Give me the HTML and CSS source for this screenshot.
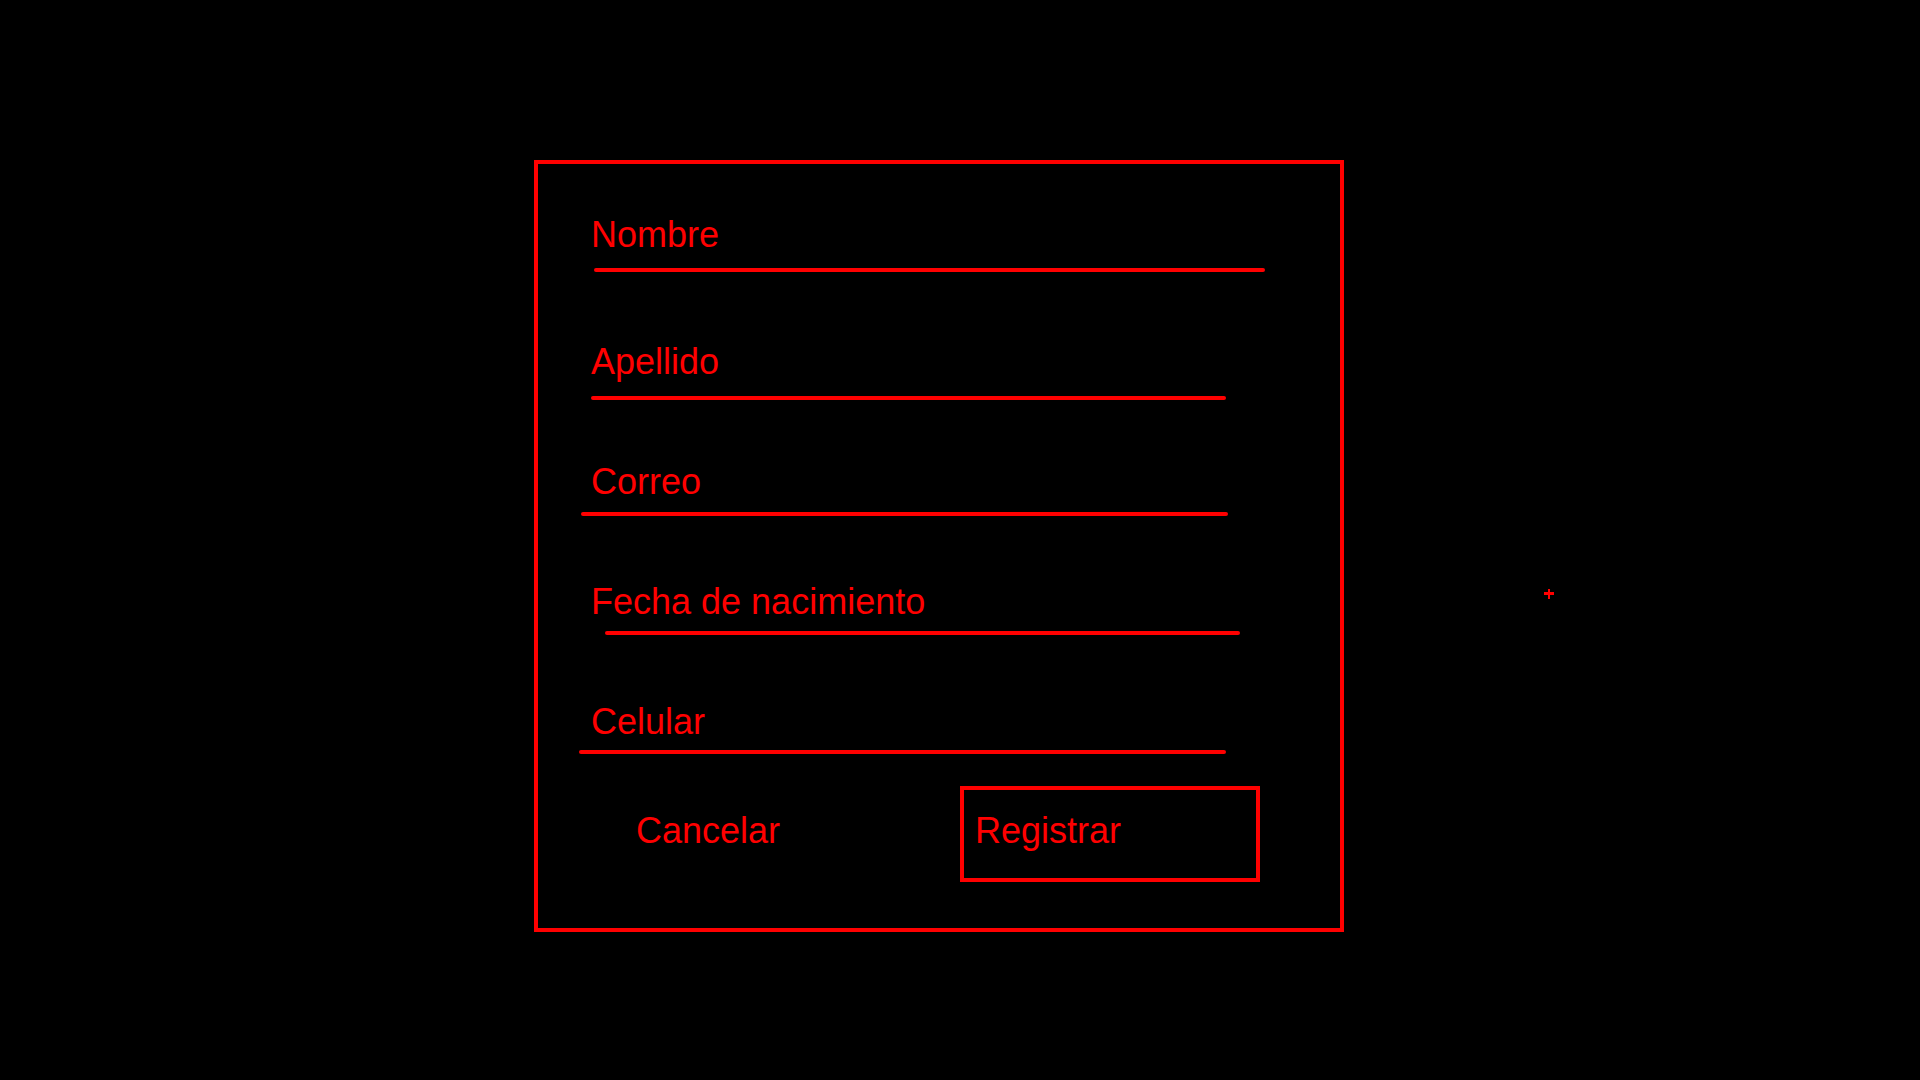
FILE: index.html
```html
<!DOCTYPE html>
<html lang="es">
<head>
<meta charset="utf-8">
<title>Registro</title>
<link rel="stylesheet" href="styles.css">
</head>
<body>
<main class="stage">
  <form class="form">
    <div class="field field-nombre">
      <label class="label">Nombre</label>
      <div class="line"></div>
    </div>
    <div class="field field-apellido">
      <label class="label">Apellido</label>
      <div class="line"></div>
    </div>
    <div class="field field-correo">
      <label class="label">Correo</label>
      <div class="line"></div>
    </div>
    <div class="field field-fecha">
      <label class="label">Fecha de nacimiento</label>
      <div class="line"></div>
    </div>
    <div class="field field-celular">
      <label class="label">Celular</label>
      <div class="line"></div>
    </div>
    <div class="actions">
      <span class="btn-cancel">Cancelar</span>
      <span class="btn-register">Registrar</span>
    </div>
  </form>
  <span class="plus" aria-hidden="true"></span>
</main>
</body>
</html>
```
FILE: styles.css
```css
html, body {
  margin: 0;
  padding: 0;
  background: #000;
}

.stage {
  position: relative;
  width: 1920px;
  height: 1080px;
  padding-top: 160px;
  box-sizing: border-box;
  font-family: "Liberation Sans", Arial, sans-serif;
  font-size: 36px;
  color: #ff0000;
}

.form {
  margin-left: 534px;
  width: 810px;
  height: 772px;
  border: 4px solid #ff0000;
  box-sizing: border-box;
  display: flex;
  flex-direction: column;
}

.field {
  display: flex;
  flex-direction: column;
  align-items: flex-start;
}

.label {
  display: block;
  height: 40px;
  line-height: 40px;
  padding-top: 1px;
  padding-left: 53px;
  white-space: nowrap;
}

.line {
  height: 4px;
  background: #ff0000;
  border-radius: 2px;
}

.field-nombre { margin-top: 50px; }
.field-nombre .line { margin-top: 13px; margin-left: 56px; width: 671px; }

.field-apellido { margin-top: 69px; }
.field-apellido .line { margin-top: 14px; margin-left: 53px; width: 635px; }

.field-correo { margin-top: 61px; }
.field-correo .line { margin-top: 10px; margin-left: 43px; width: 647px; }

.field-fecha { margin-top: 65px; }
.field-fecha .line { margin-top: 9px; margin-left: 67px; width: 635px; }

.field-celular { margin-top: 66px; }
.field-celular .line { margin-top: 8px; margin-left: 41px; width: 647px; }

.actions {
  margin-top: 32px;
  padding-left: 98px;
  display: flex;
  align-items: flex-start;
}

.btn-cancel {
  width: 324px;
  padding-top: 25px;
  line-height: 40px;
  height: 40px;
  white-space: nowrap;
}

.btn-register {
  width: 300px;
  height: 96px;
  box-sizing: border-box;
  border: 4px solid #ff0000;
  padding: 21px 0 0 11px;
  line-height: 40px;
  white-space: nowrap;
}

.plus {
  position: absolute;
  left: 1544px;
  top: 589px;
  width: 10px;
  height: 10px;
}

.plus::before,
.plus::after {
  content: "";
  position: absolute;
  background: #ff0000;
}

.plus::before {
  left: 0;
  top: 3px;
  width: 10px;
  height: 3px;
}

.plus::after {
  left: 4px;
  top: 0;
  width: 2px;
  height: 10px;
}
```
